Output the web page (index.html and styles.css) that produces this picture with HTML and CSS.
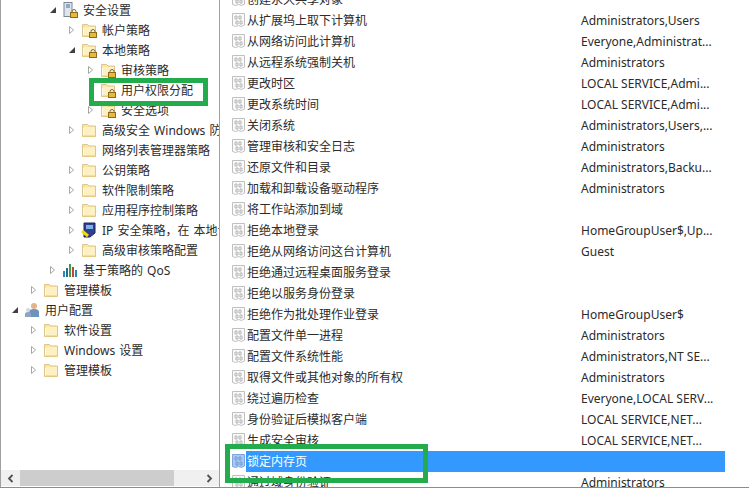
FILE: index.html
```html
<!DOCTYPE html>
<html lang="zh-CN">
<head>
    <meta charset="UTF-8">
    <title>本地安全策略</title>
    <link rel="stylesheet" href="styles.css">
</head>
<body>
    <svg class="defs" width="0" height="0">
        <symbol id="folder" viewBox="0 0 16 16">
            <path d="M1.500 14.500V2.500h5l1.500 1.500h6.500v10.500z" fill="#fbe5a2" stroke="#dcc68c"/>
            <path d="M2 14V6l2-1h10v9z" fill="#fdf0c2"/>
            <path d="M2.500 14V6" stroke="#fffbe8"/>
            <path d="M2 14h12" stroke="#eccb7c"/>
        </symbol>
        <symbol id="lock" viewBox="0 0 8 9">
            <path d="M2 4V2.500a2 2 0 0 1 4 0V4" fill="none" stroke="#7a6a3c"/>
            <rect x="0.500" y="3.500" width="7" height="5" fill="#e8b93a" stroke="#8b6c1c"/>
        </symbol>
        <symbol id="open" viewBox="0 0 8 8">
            <path d="M1.500 0.500l4 3.500-4 3.500z" fill="#fff" stroke="#a6a6a6"/>
        </symbol>
        <symbol id="shut" viewBox="0 0 8 8">
            <path d="M7 1v6H1z" fill="#404040"/>
        </symbol>
        <symbol id="policy" viewBox="0 0 15 16">
            <path d="M1.500 1.500h12v11.500l-3 1.500-3-1-3 1-3-1z" fill="#fafafa" stroke="#c0c0c0"/>
            <path d="M4 4h2v3H4zM8 4h2v3H8zM5 9h2v3H5zM9 9h2v3H9z" fill="none" stroke="#b4b4b4"/>
        </symbol>
        <symbol id="policy-sel" viewBox="0 0 15 16">
            <path d="M1.500 1.500h12v11.500l-3 1.500-3-1-3 1-3-1z" fill="#a9c8f2" stroke="#7fa6dc"/>
            <path d="M4 4h2v3H4zM8 4h2v3H8zM5 9h2v3H5zM9 9h2v3H9z" fill="none" stroke="#6f9ad8"/>
        </symbol>
    </svg>

    <div class="console">
        <div class="tree">
            <ul class="tree-rows">
                <li class="row lvl-3"><svg class="arrow"><use href="#shut"/></svg>
                    <svg class="icon" viewBox="0 0 16 16"><rect x="2" y="0.500" width="8" height="14" fill="#dfe5ee" stroke="#7b8796"/><path d="M4 3h4M4 5h4" stroke="#4c6a91"/></svg><svg class="badge"><use href="#lock"/></svg>
                    <span>安全设置</span></li>
                <li class="row lvl-4"><svg class="arrow"><use href="#open"/></svg><svg class="icon"><use href="#folder"/></svg><svg class="badge"><use href="#lock"/></svg><span>帐户策略</span></li>
                <li class="row lvl-4"><svg class="arrow"><use href="#shut"/></svg><svg class="icon"><use href="#folder"/></svg><svg class="badge"><use href="#lock"/></svg><span>本地策略</span></li>
                <li class="row lvl-5"><svg class="arrow"><use href="#open"/></svg><svg class="icon"><use href="#folder"/></svg><svg class="badge"><use href="#lock"/></svg><span>审核策略</span></li>
                <li class="row lvl-5"><i class="arrow"></i><svg class="icon"><use href="#folder"/></svg><svg class="badge"><use href="#lock"/></svg><span>用户权限分配</span></li>
                <li class="row lvl-5"><svg class="arrow"><use href="#open"/></svg><svg class="icon"><use href="#folder"/></svg><svg class="badge"><use href="#lock"/></svg><span>安全选项</span></li>
                <li class="row lvl-4"><svg class="arrow"><use href="#open"/></svg><svg class="icon"><use href="#folder"/></svg><span>高级安全 Windows 防火墙</span></li>
                <li class="row lvl-4"><i class="arrow"></i><svg class="icon"><use href="#folder"/></svg><span>网络列表管理器策略</span></li>
                <li class="row lvl-4"><svg class="arrow"><use href="#open"/></svg><svg class="icon"><use href="#folder"/></svg><span>公钥策略</span></li>
                <li class="row lvl-4"><svg class="arrow"><use href="#open"/></svg><svg class="icon"><use href="#folder"/></svg><span>软件限制策略</span></li>
                <li class="row lvl-4"><svg class="arrow"><use href="#open"/></svg><svg class="icon"><use href="#folder"/></svg><span>应用程序控制策略</span></li>
                <li class="row lvl-4"><svg class="arrow"><use href="#open"/></svg>
                    <svg class="icon" viewBox="0 0 16 16"><path d="M3 1h11v10l-5 4H3z" fill="#2f3f8f" stroke="#1d2560"/><rect x="5" y="3" width="7" height="4" fill="#7fb2e0"/><path d="M1 9l6 5" stroke="#f5d90a" stroke-width="3"/></svg>
                    <span>IP 安全策略，在 本地计算机</span></li>
                <li class="row lvl-4"><svg class="arrow"><use href="#open"/></svg><svg class="icon"><use href="#folder"/></svg><span>高级审核策略配置</span></li>
                <li class="row lvl-3"><svg class="arrow"><use href="#open"/></svg>
                    <svg class="icon" viewBox="0 0 16 16"><path d="M1 9h2v6H1z" fill="#2a8ab0"/><path d="M4 6h2v9H4z" fill="#1f6f92"/><path d="M7 2h2v13H7z" fill="#3f9a4a"/><path d="M10 5h2v10h-2z" fill="#c0453f"/><path d="M13 8h2v7h-2z" fill="#2a8ab0"/></svg>
                    <span>基于策略的 QoS</span></li>
                <li class="row lvl-2"><svg class="arrow"><use href="#open"/></svg><svg class="icon"><use href="#folder"/></svg><span>管理模板</span></li>
                <li class="row lvl-1"><svg class="arrow"><use href="#shut"/></svg>
                    <svg class="icon" viewBox="0 0 16 16"><circle cx="10" cy="4" r="3" fill="#e0b48c"/><path d="M5 15V10q0-3 5-3t5 3v5z" fill="#6d93bd"/><circle cx="4" cy="8" r="2" fill="#cfd8e3"/><path d="M1 15v-3q0-2 3-2t3 2v3z" fill="#8ea6c1"/></svg>
                    <span>用户配置</span></li>
                <li class="row lvl-2"><svg class="arrow"><use href="#open"/></svg><svg class="icon"><use href="#folder"/></svg><span>软件设置</span></li>
                <li class="row lvl-2"><svg class="arrow"><use href="#open"/></svg><svg class="icon"><use href="#folder"/></svg><span>Windows 设置</span></li>
                <li class="row lvl-2"><svg class="arrow"><use href="#open"/></svg><svg class="icon"><use href="#folder"/></svg><span>管理模板</span></li>
            </ul>
            <div class="hscroll">
                <svg class="scroll-btn" viewBox="0 0 7 9"><path d="M5.500 1L2 4.500 5.500 8" fill="none" stroke="#505050" stroke-width="1.800"/></svg>
                <div class="scroll-track"><div class="scroll-thumb"></div></div>
                <svg class="scroll-btn" viewBox="0 0 7 9"><path d="M1.500 1L5 4.500 1.500 8" fill="none" stroke="#505050" stroke-width="1.800"/></svg>
            </div>
        </div>

        <div class="list">
            <div class="item"><svg class="item-icon"><use href="#policy"/></svg><span class="name">创建永久共享对象</span><span class="value"></span></div>
            <div class="item"><svg class="item-icon"><use href="#policy"/></svg><span class="name">从扩展坞上取下计算机</span><span class="value">Administrators,Users</span></div>
            <div class="item"><svg class="item-icon"><use href="#policy"/></svg><span class="name">从网络访问此计算机</span><span class="value">Everyone,Administrat...</span></div>
            <div class="item"><svg class="item-icon"><use href="#policy"/></svg><span class="name">从远程系统强制关机</span><span class="value">Administrators</span></div>
            <div class="item"><svg class="item-icon"><use href="#policy"/></svg><span class="name">更改时区</span><span class="value">LOCAL SERVICE,Admi...</span></div>
            <div class="item"><svg class="item-icon"><use href="#policy"/></svg><span class="name">更改系统时间</span><span class="value">LOCAL SERVICE,Admi...</span></div>
            <div class="item"><svg class="item-icon"><use href="#policy"/></svg><span class="name">关闭系统</span><span class="value">Administrators,Users,...</span></div>
            <div class="item"><svg class="item-icon"><use href="#policy"/></svg><span class="name">管理审核和安全日志</span><span class="value">Administrators</span></div>
            <div class="item"><svg class="item-icon"><use href="#policy"/></svg><span class="name">还原文件和目录</span><span class="value">Administrators,Backu...</span></div>
            <div class="item"><svg class="item-icon"><use href="#policy"/></svg><span class="name">加载和卸载设备驱动程序</span><span class="value">Administrators</span></div>
            <div class="item"><svg class="item-icon"><use href="#policy"/></svg><span class="name">将工作站添加到域</span><span class="value"></span></div>
            <div class="item"><svg class="item-icon"><use href="#policy"/></svg><span class="name">拒绝本地登录</span><span class="value">HomeGroupUser$,Up...</span></div>
            <div class="item"><svg class="item-icon"><use href="#policy"/></svg><span class="name">拒绝从网络访问这台计算机</span><span class="value">Guest</span></div>
            <div class="item"><svg class="item-icon"><use href="#policy"/></svg><span class="name">拒绝通过远程桌面服务登录</span><span class="value"></span></div>
            <div class="item"><svg class="item-icon"><use href="#policy"/></svg><span class="name">拒绝以服务身份登录</span><span class="value"></span></div>
            <div class="item"><svg class="item-icon"><use href="#policy"/></svg><span class="name">拒绝作为批处理作业登录</span><span class="value">HomeGroupUser$</span></div>
            <div class="item"><svg class="item-icon"><use href="#policy"/></svg><span class="name">配置文件单一进程</span><span class="value">Administrators</span></div>
            <div class="item"><svg class="item-icon"><use href="#policy"/></svg><span class="name">配置文件系统性能</span><span class="value">Administrators,NT SE...</span></div>
            <div class="item"><svg class="item-icon"><use href="#policy"/></svg><span class="name">取得文件或其他对象的所有权</span><span class="value">Administrators</span></div>
            <div class="item"><svg class="item-icon"><use href="#policy"/></svg><span class="name">绕过遍历检查</span><span class="value">Everyone,LOCAL SERV...</span></div>
            <div class="item"><svg class="item-icon"><use href="#policy"/></svg><span class="name">身份验证后模拟客户端</span><span class="value">LOCAL SERVICE,NET...</span></div>
            <div class="item"><svg class="item-icon"><use href="#policy"/></svg><span class="name">生成安全审核</span><span class="value">LOCAL SERVICE,NET...</span></div>
            <div class="item selected"><svg class="item-icon"><use href="#policy-sel"/></svg><span class="name">锁定内存页</span><span class="value"></span></div>
            <div class="item"><svg class="item-icon"><use href="#policy"/></svg><span class="name">通过域身份验证</span><span class="value">Administrators</span></div>
        </div>
    </div>

    <div class="mark mark-tree"></div>
    <div class="mark mark-list"></div>
</body>
</html>
```

FILE: styles.css
```css
html, body { margin: 0; height: 100%; overflow: hidden; background: #fff; }
body { position: relative; font: 12px/20px "Noto Sans", "Noto Sans CJK SC", sans-serif; color: #2b2b2b; }
ul { list-style: none; margin: 0; padding: 0; }
.defs { position: absolute; }

.console { display: flex; height: 488px; border-bottom: 1px solid #8c8c8c; box-sizing: border-box; }

.tree { width: 218px; flex: none; display: flex; flex-direction: column; border-left: 1px solid #a0a0a0; border-right: 1px solid #a0a0a0; overflow: hidden; }
.tree-rows { flex: 1; }
.row { display: flex; align-items: center; height: 20px; white-space: nowrap; position: relative; word-spacing: 1px; }
.row span { line-height: 18px; padding-top: 2px; }
.lvl-1 { padding-left: 10px; }
.lvl-2 { padding-left: 29px; }
.lvl-3 { padding-left: 48px; }
.lvl-4 { padding-left: 67px; }
.lvl-5 { padding-left: 86px; }
.arrow { width: 8px; height: 8px; flex: none; margin-right: 5px; display: block; }
.icon { width: 16px; height: 16px; flex: none; margin-right: 5px; }
.badge { width: 8px; height: 9px; position: absolute; margin-left: 21px; margin-top: 7px; }
.hscroll { display: flex; align-items: center; height: 16px; background: #f0f0f0; flex: none; margin-bottom: 1px; }
.scroll-btn { width: 19px; height: 9px; flex: none; }
.scroll-track { flex: 1; height: 16px; }
.scroll-thumb { width: 154px; height: 16px; background: #cdcdcd; }

.list { flex: 1; padding: 0 0 0 10px; overflow: hidden; margin-top: -11px; }
.item { display: flex; align-items: center; height: 21px; white-space: nowrap; }
.item-icon { width: 15px; height: 16px; flex: none; margin-left: 1px; margin-bottom: 1px; }
.name { width: 334px; flex: none; padding-left: 1px; line-height: 21px; }
.value { flex: none; line-height: 21px; }
.selected { width: 494px; }
.selected .name { background: #3399ff; color: #fff; width: 478px; }

.mark { position: absolute; border: 5px solid #22ac4c; box-sizing: border-box; }
.mark-tree { left: 89px; top: 78px; width: 119px; height: 28px; }
.mark-list { left: 225px; top: 444px; width: 203px; height: 39px; }
```
